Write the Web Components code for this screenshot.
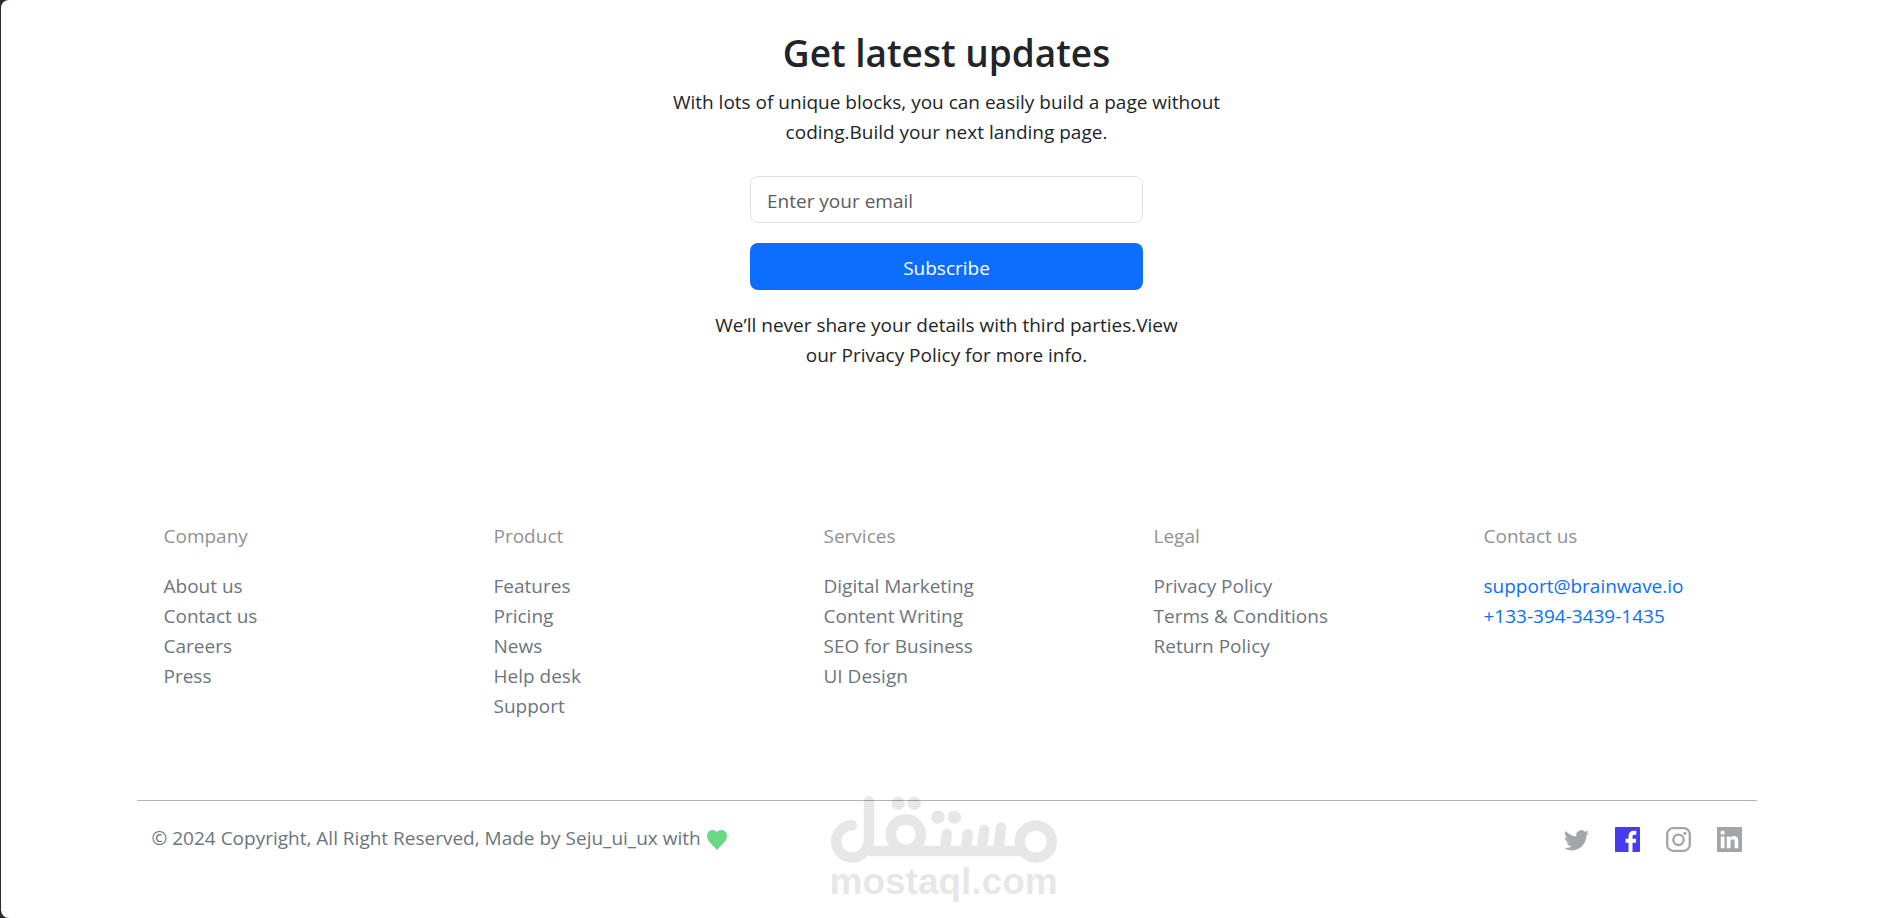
<!DOCTYPE html>
<html lang="en">
<head>
<meta charset="utf-8">
<meta name="viewport" content="width=device-width, initial-scale=1">
<title>Get latest updates</title>
<style>
  body {
    margin: 0;
    background: #2b2a2d;
    color: #212529;
    font: 19px/30px "Open Sans", "Noto Sans", sans-serif;
  }
</style>
</head>
<body>
<page-shell>
  <newsletter-signup>
    <span slot="title">Get latest updates</span>
    <span slot="lead">With lots of unique blocks, you can easily build a page without coding.Build your next landing page.</span>
    <span slot="note">We’ll never share your details with third parties.View our Privacy Policy for more info.</span>
  </newsletter-signup>
  <site-footer>
    <footer-column slot="columns" heading="Company">
      <a href="#about">About us</a>
      <a href="#contact">Contact us</a>
      <a href="#careers">Careers</a>
      <a href="#press">Press</a>
    </footer-column>
    <footer-column slot="columns" heading="Product">
      <a href="#features">Features</a>
      <a href="#pricing">Pricing</a>
      <a href="#news">News</a>
      <a href="#help">Help desk</a>
      <a href="#support">Support</a>
    </footer-column>
    <footer-column slot="columns" heading="Services">
      <a href="#marketing">Digital Marketing</a>
      <a href="#writing">Content Writing</a>
      <a href="#seo">SEO for Business</a>
      <a href="#design">UI Design</a>
    </footer-column>
    <footer-column slot="columns" heading="Legal">
      <a href="#privacy">Privacy Policy</a>
      <a href="#terms">Terms &amp; Conditions</a>
      <a href="#returns">Return Policy</a>
    </footer-column>
    <footer-column slot="columns" heading="Contact us" accent>
      <a href="mailto:support@brainwave.io">support@brainwave.io</a>
      <a href="tel:+13339434391435">+133-394-3439-1435</a>
    </footer-column>
    <span slot="copyright">© 2024 Copyright, All Right Reserved, Made by Seju_ui_ux with</span>
    <social-link slot="social" name="twitter"></social-link>
    <social-link slot="social" name="facebook"></social-link>
    <social-link slot="social" name="instagram"></social-link>
    <social-link slot="social" name="linkedin"></social-link>
  </site-footer>
  <site-watermark></site-watermark>
</page-shell>

<script>
class PageShell extends HTMLElement {
  constructor() {
    super();
    this.attachShadow({ mode: "open" });
    this.shadowRoot.innerHTML = `
      <style>
        :host {
          display: block;
          position: relative;
          box-sizing: border-box;
          min-height: 100vh;
          margin-left: 1px;
          padding: 29px 0 60px;
          overflow: hidden;
          background: #fff;
          border-radius: 8px 0 0 8px;
        }
        .container {
          box-sizing: border-box;
          max-width: 1626px;
          margin: 0 auto;
          padding: 0 0 0 6px;
        }
        @media (max-width: 1660px) {
          .container { padding: 0 16px; }
        }
      </style>
      <div class="container"><slot></slot></div>
    `;
  }
}

class NewsletterSignup extends HTMLElement {
  constructor() {
    super();
    this.attachShadow({ mode: "open" });
    this.shadowRoot.innerHTML = `
      <style>
        :host { display: block; text-align: center; }
        section {
          display: flex;
          flex-direction: column;
          align-items: center;
        }
        h1 {
          margin: 0 0 10px;
          font-size: 37px;
          font-weight: 600;
          line-height: 48px;
        }
        p { margin: 0; }
        .lead { max-width: 570px; }
        .note { max-width: 480px; }
        form {
          display: flex;
          flex-direction: column;
          gap: 20px;
          width: 100%;
          max-width: 393px;
          margin: 29px 0 20px;
        }
        input, button {
          box-sizing: border-box;
          width: 100%;
          height: 47px;
          border-radius: 8px;
          font: inherit;
        }
        input {
          padding: 2px 16px 0;
          border: 1px solid #dee2e6;
          background: #fff;
          color: #212529;
        }
        input::placeholder { color: #595c5f; opacity: 1; }
        button {
          padding: 2px 0 0;
          border: 0;
          background: #0d6efd;
          color: #fff;
          cursor: pointer;
        }
      </style>
      <section>
        <h1><slot name="title"></slot></h1>
        <p class="lead"><slot name="lead"></slot></p>
        <form>
          <input type="email" placeholder="Enter your email" aria-label="Enter your email">
          <button type="submit">Subscribe</button>
        </form>
        <p class="note"><slot name="note"></slot></p>
      </section>
    `;
  }

  connectedCallback() {
    this.shadowRoot
      .querySelector("form")
      .addEventListener("submit", (e) => e.preventDefault());
  }
}

class SiteFooter extends HTMLElement {
  constructor() {
    super();
    this.attachShadow({ mode: "open" });
    this.shadowRoot.innerHTML = `
      <style>
        :host { display: block; margin-top: 151px; color: #6c757d; }
        .columns {
          display: grid;
          grid-template-columns: repeat(5, minmax(0, 1fr));
          gap: 57px;
          padding: 0 0 79px 27px;
        }
        .bottom {
          display: flex;
          justify-content: space-between;
          gap: 24px;
          padding: 22px 15px 0;
          border-top: 1px solid #adb5bd;
        }
        .copyright { display: flex; align-items: center; gap: 6px; }
        .heart { width: 20px; height: 24px; fill: #6bd888; flex: none; }
        .social { display: flex; align-items: flex-start; gap: 26px; padding-top: 4px; }
        @media (max-width: 1200px) {
          .columns { grid-template-columns: repeat(auto-fit, minmax(210px, 1fr)); gap: 32px; }
          .bottom { flex-wrap: wrap; }
        }
      </style>
      <footer>
        <div class="columns"><slot name="columns"></slot></div>
        <div class="bottom">
          <div class="copyright">
            <slot name="copyright"></slot>
            <svg class="heart" viewBox="0 -4 20 24" aria-hidden="true">
              <path d="M10 20 2 11.500C-.5 8.500-.5 4 1.500 1.800 4-.7 8-.5 10 2.200 12-.5 16-.7 18.500 1.800 20.500 4 20.500 8.500 18 11.500z"/>
            </svg>
          </div>
          <div class="social"><slot name="social"></slot></div>
        </div>
      </footer>
    `;
  }
}

class FooterColumn extends HTMLElement {
  constructor() {
    super();
    this.attachShadow({ mode: "open" });
  }

  connectedCallback() {
    this.shadowRoot.innerHTML = `
      <style>
        :host { display: block; --link: #6c757d; }
        :host([accent]) { --link: #0d6efd; }
        h2 {
          margin: 0 0 20px;
          color: #909294;
          font-size: 19px;
          font-weight: 400;
          line-height: 30px;
        }
        nav { display: flex; flex-direction: column; align-items: flex-start; }
        ::slotted(a) { color: var(--link); text-decoration: none; }
      </style>
      <h2>${this.getAttribute("heading")}</h2>
      <nav aria-label="${this.getAttribute("heading")}"><slot></slot></nav>
    `;
  }
}

const SOCIAL_ICONS = {
  twitter: `
    <path transform="translate(0 0) scale(1.56)" fill="#a3a5ab" d="M5.026 15c6.038 0 9.341-5.003 9.341-9.334 0-.14 0-.282-.006-.422A6.685 6.685 0 0 0 16 3.542a6.658 6.658 0 0 1-1.889.518 3.301 3.301 0 0 0 1.447-1.817 6.533 6.533 0 0 1-2.087.793A3.286 3.286 0 0 0 7.875 6.03a9.325 9.325 0 0 1-6.767-3.429 3.289 3.289 0 0 0 1.018 4.382A3.323 3.323 0 0 1 .64 6.575v.045a3.288 3.288 0 0 0 2.632 3.218 3.203 3.203 0 0 1-.865.115 3.23 3.23 0 0 1-.614-.057 3.283 3.283 0 0 0 3.067 2.277A6.588 6.588 0 0 1 .78 13.58a6.32 6.32 0 0 1-.78-.045A9.344 9.344 0 0 0 5.026 15z"/>`,
  facebook: `
    <rect width="25" height="25" rx="1" fill="#473bf0"/>
    <path fill="none" stroke="#fff" stroke-width="4" d="M15.500 25V9.500Q15.500 5.800 19 5.800H21.300M10.500 13.700H21"/>`,
  instagram: `
    <g fill="none" stroke="#a3a5ab" stroke-width="2.300">
      <rect x="1.200" y="1.200" width="22.600" height="22.600" rx="6"/>
      <circle cx="12.500" cy="12.800" r="5.200"/>
    </g>
    <circle cx="18.900" cy="6.300" r="1.600" fill="#a3a5ab"/>`,
  linkedin: `
    <rect width="25" height="25" rx="1" fill="#a3a5ab"/>
    <g fill="#fff">
      <circle cx="5.600" cy="5.700" r="2.100"/>
      <path d="M3.800 9.400h3.700v11.900H3.800zM9.800 9.400h3.500V11c.6-1.100 1.900-1.900 3.600-1.900 3.500 0 4.400 2.300 4.400 5.500v6.700h-3.700v-5.900c0-1.700-.2-3.100-2-3.100s-2.100 1.500-2.100 3.100v5.900H9.800z"/>
    </g>`,
};

class SocialLink extends HTMLElement {
  constructor() {
    super();
    this.attachShadow({ mode: "open" });
  }

  connectedCallback() {
    const name = this.getAttribute("name");
    this.shadowRoot.innerHTML = `
      <style>
        :host { display: block; }
        a, svg { display: block; width: 25px; height: 25px; }
      </style>
      <a href="#${name}" aria-label="${name}">
        <svg viewBox="0 0 25 25" aria-hidden="true">${SOCIAL_ICONS[name]}</svg>
      </a>
    `;
  }
}

// Floats over the bottom of the page
class SiteWatermark extends HTMLElement {
  constructor() {
    super();
    this.attachShadow({ mode: "open" });
    this.shadowRoot.innerHTML = `
      <style>
        :host {
          display: block;
          position: absolute;
          left: 0;
          right: 0;
          bottom: 18px;
          width: 228px;
          margin: 0 auto;
          opacity: .09;
          color: #000;
          pointer-events: none;
        }
        svg { display: block; width: 228px; height: 67px; }
        span {
          display: block;
          font: bold 37px/37px "Liberation Sans", Arial, sans-serif;
          text-align: center;
        }
      </style>
      <svg viewBox="90 47 678 200" aria-hidden="true">
        <g fill="none" stroke="#000" stroke-width="31" stroke-linecap="round" stroke-linejoin="round">
          <path d="M154 134.500A48 48 0 1 0 202 192L205 183V63"/>
          <path d="M205 211H660" stroke-linecap="butt"/>
          <circle cx="315" cy="162" r="45"/>
          <circle cx="703" cy="183" r="48"/>
          <path d="M437 160 432 205M500 161 495 205M549 148 542 205M599 141 592 205"/>
        </g>
        <circle cx="292" cy="69" r="20"/>
        <circle cx="340" cy="69" r="20"/>
        <circle cx="411" cy="110" r="20"/>
        <circle cx="460" cy="110" r="20"/>
      </svg>
      <span>mostaql.com</span>
    `;
  }
}

customElements.define("page-shell", PageShell);
customElements.define("newsletter-signup", NewsletterSignup);
customElements.define("site-footer", SiteFooter);
customElements.define("footer-column", FooterColumn);
customElements.define("social-link", SocialLink);
customElements.define("site-watermark", SiteWatermark);
</script>
</body>
</html>
